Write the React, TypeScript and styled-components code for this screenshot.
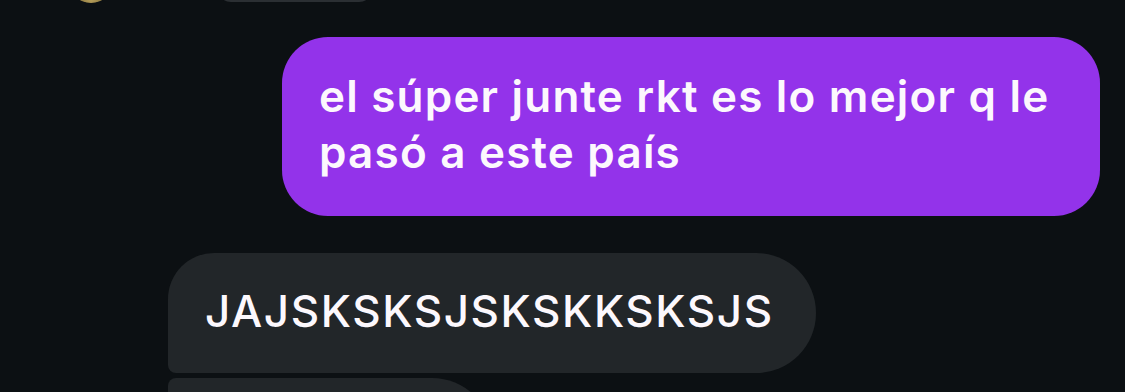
import styled, { createGlobalStyle } from "styled-components";

const Global = createGlobalStyle`
  html, body {
    margin: 0;
    background: #0c1013;
    overflow: hidden;
  }
  body {
    font-family: Inter, "Noto Sans", "Liberation Sans", sans-serif;
    color: #fcf8fd;
  }
`

type Props = {
  mine?: boolean
  pos?: "first" | "middle" | "last" | "single"
  $w?: number
}

export default function App() {
  return (
    <>
      <Global />
      <Thread>
        <PrevRow>
          <Avatar />
          <Reaction />
        </PrevRow>

        <OutRow>
          <Bubble mine pos="single">
            el súper junte rkt es lo mejor q le pasó a este país
          </Bubble>
        </OutRow>

        <InGroup>
          <Bubble pos="first">JAJSKSKSJSKSKKSKSJS</Bubble>
          {/* next message, only its top edge is in view */}
          <Bubble pos="middle" $w={324} />
        </InGroup>
      </Thread>
    </>
  )
}

const Thread = styled.main`
  display: flex;
  flex-direction: column;
  margin-top: -42px;
  padding-right: 25px;
`

const PrevRow = styled.div`
  display: flex;
  align-items: flex-end;
  gap: 104px;
  padding-left: 69px;
  height: 45px;
`

const Avatar = styled.div`
  width: 44px;
  height: 44px;
  border-radius: 50%;
  background: radial-gradient(circle at 50% 90%, #b9a15c 0%, #6b5a2c 45%, #1b1a16 80%);
`

const Reaction = styled.div`
  width: 156px;
  height: 40px;
  border-radius: 14px;
  background: #1a1e21;
  border-bottom: 2px solid #2b2f33;
  margin-bottom: 1px;
`

const OutRow = styled.div`
  display: flex;
  justify-content: flex-end;
  margin-top: 34px;
`

const InGroup = styled.div`
  display: flex;
  flex-direction: column;
  align-items: flex-start;
  gap: 5px;
  padding-left: 168px;
  margin-top: 37px;
`

const radii = (p: Props) => {
  if (p.mine) return "46px"
  switch (p.pos) {
    case "first": return "46px 60px 60px 8px"
    case "middle": return "8px 60px 60px 8px"
    case "last": return "8px 60px 60px 46px"
    default: return "46px 60px 60px 46px"
  }
}

const Bubble = styled.div<Props>`
  box-sizing: border-box;
  max-width: 818px;
  min-height: 120px;
  width: ${p => p.$w ? `${p.$w}px` : "auto"};
  border-radius: ${radii};
  background: ${p => p.mine ? "#9333ea" : "#222629"};
  font-size: 44px;
  line-height: 56px;
  font-weight: ${p => p.mine ? 600 : 500};
  padding: ${p => p.mine ? "31px 37px 36px 37px" : "30px 42px 34px 37px"};
  letter-spacing: ${p => p.mine ? "1.2px" : "1.6px"};
`
